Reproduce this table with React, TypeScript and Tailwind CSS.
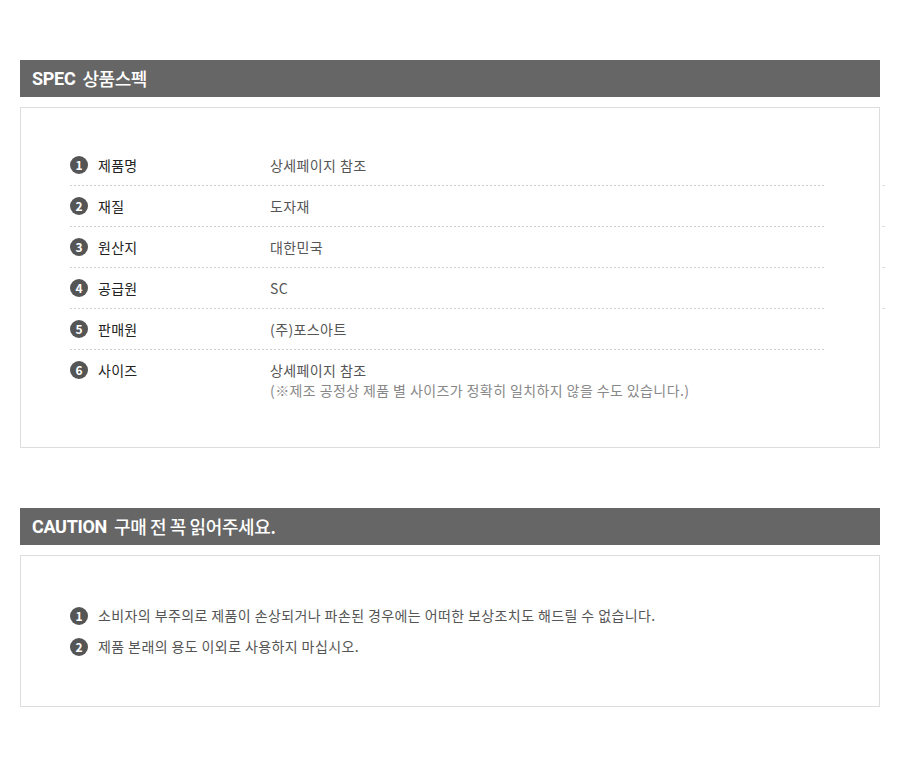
import React from 'react';

const FONT = { fontFamily: '"Noto Sans CJK KR", "Noto Sans", sans-serif' };

interface SpecRow {
  label: string;
  value: string;
  note?: string;
}

const specs: SpecRow[] = [
  { label: '제품명', value: '상세페이지 참조' },
  { label: '재질', value: '도자재' },
  { label: '원산지', value: '대한민국' },
  { label: '공급원', value: 'SC' },
  { label: '판매원', value: '(주)포스아트' },
  {
    label: '사이즈',
    value: '상세페이지 참조',
    note: '(※제조 공정상 제품 별 사이즈가 정확히 일치하지 않을 수도 있습니다.)',
  },
];

const cautions = [
  '소비자의 부주의로 제품이 손상되거나 파손된 경우에는 어떠한 보상조치도 해드릴 수 없습니다.',
  '제품 본래의 용도 이외로 사용하지 마십시오.',
];

const Num = ({ n }: { n: number }) => (
  <span className="flex h-[18px] w-[18px] shrink-0 items-center justify-center rounded-full bg-[#555] text-[12px] font-bold leading-none text-white">
    {n}
  </span>
);

const Dashed = () => (
  <div className="h-px w-full bg-[linear-gradient(to_right,#d0d0d0_50%,transparent_50%)] bg-[length:4px_1px] bg-repeat-x" />
);

const SectionTitle = ({ en, ko }: { en: string; ko: string }) => (
  <div className="flex h-[37px] items-center bg-[#666] px-3 text-white">
    <span className="text-[18px] font-bold tracking-[-0.3px]" style={{ fontFamily: 'Roboto, "Noto Sans CJK KR", sans-serif' }}>
      {en}
    </span>
    <span className="ml-[7px] text-[18px] font-medium tracking-[-0.4px]">{ko}</span>
  </div>
);

export default function App() {
  return (
    <div className="min-h-[768px] bg-white px-5 pt-[60px]" style={FONT}>
      {/* SPEC */}
      <SectionTitle en="SPEC" ko="상품스펙" />
      <div className="mt-[10px] border border-[#ddd] pl-[49px] pt-[37px] pb-[47px]">
        <div className="w-[755px]">
          {specs.map((s, i) => (
            <div key={s.label}>
              <div className={i === specs.length - 1 ? 'flex pt-[10px]' : 'flex h-[40px] items-center'}>
                <div className={i === specs.length - 1 ? 'flex h-[20px] w-[200px] items-center' : 'flex w-[200px] items-center'}>
                  <Num n={i + 1} />
                  <span className="ml-[10px] text-[14px] tracking-[0.3px] text-[#222]">{s.label}</span>
                </div>
                <div className="text-[14px] leading-[20px] tracking-[0.4px] text-[#555]">
                  <div>{s.value}</div>
                  {s.note && <div className="text-[#888]">{s.note}</div>}
                </div>
              </div>
              {i < specs.length - 1 && (
                <div className="relative">
                  <Dashed />
                  {i < 4 && <span className="absolute left-[812px] top-0 h-px w-[3px] bg-[#ddd]" />}
                </div>
              )}
            </div>
          ))}
        </div>
      </div>

      {/* CAUTION */}
      <div className="mt-[60px]">
        <SectionTitle en="CAUTION" ko="구매 전 꼭 읽어주세요." />
      </div>
      <div className="mt-[10px] border border-[#ddd] pl-[49px] pt-[44px] pb-[44px]">
        {cautions.map((c, i) => (
          <div key={c} className="flex h-[31px] items-center">
            <Num n={i + 1} />
            <span className="ml-[10px] text-[14px] tracking-[0.4px] text-[#555]">{c}</span>
          </div>
        ))}
      </div>
    </div>
  );
}
